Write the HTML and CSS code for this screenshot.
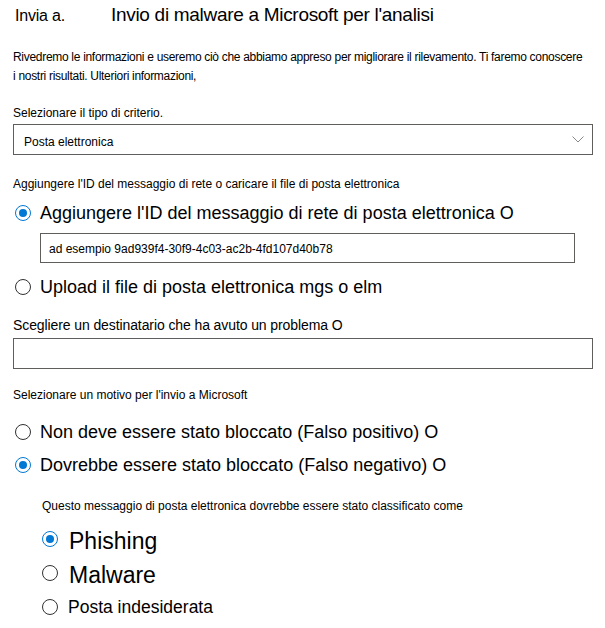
FILE: index.html
```html
<!DOCTYPE html>
<html lang="it">
<head>
<meta charset="utf-8">
<title>Invio di malware a Microsoft</title>
<link rel="stylesheet" href="styles.css">
</head>
<body>
<div class="page">
  <header class="head">
    <span class="crumb">Invia a.</span>
    <h1 class="title">Invio di malware a Microsoft per l'analisi</h1>
  </header>
  <p class="intro">Rivedremo le informazioni e useremo ciò che abbiamo appreso per migliorare il rilevamento. Ti faremo conoscere<br>i nostri risultati. Ulteriori informazioni,</p>

  <div class="label l1">Selezionare il tipo di criterio.</div>
  <div class="select">
    <span class="select-text">Posta elettronica</span>
    <svg class="chev" width="12" height="7" viewBox="0 0 12 7"><path d="M0.5 0.5 L6 6 L11.5 0.5" fill="none" stroke="#8a8886" stroke-width="1"/></svg>
  </div>

  <div class="label l2">Aggiungere l'ID del messaggio di rete o caricare il file di posta elettronica</div>
  <div class="radio big r1"><span class="dot on"></span><span>Aggiungere l'ID del messaggio di rete di posta elettronica O</span></div>
  <div class="field id-field"><span class="ph">ad esempio 9ad939f4-30f9-4c03-ac2b-4fd107d40b78</span></div>
  <div class="radio big r2"><span class="dot"></span><span>Upload il file di posta elettronica mgs o elm</span></div>

  <div class="label mid l3">Scegliere un destinatario che ha avuto un problema O</div>
  <div class="field wide"></div>

  <div class="label l4">Selezionare un motivo per l'invio a Microsoft</div>
  <div class="radio big r3"><span class="dot"></span><span>Non deve essere stato bloccato (Falso positivo) O</span></div>
  <div class="radio big r4"><span class="dot on"></span><span>Dovrebbe essere stato bloccato (Falso negativo) O</span></div>

  <div class="sub">
    <div class="label l5">Questo messaggio di posta elettronica dovrebbe essere stato classificato come</div>
    <div class="radio huge r5"><span class="dot on"></span><span>Phishing</span></div>
    <div class="radio huge r6"><span class="dot"></span><span>Malware</span></div>
    <div class="radio r7"><span class="dot"></span><span>Posta indesiderata</span></div>
  </div>
</div>
</body>
</html>
```

FILE: styles.css
```css
* { box-sizing: border-box; }
html, body { margin: 0; padding: 0; background: #fff; }
body { font-family: "Liberation Sans", Arial, sans-serif; color: #000; }
.page { padding: 0 12px 0 13px; display: flex; flex-direction: column; }

.head { display: flex; align-items: baseline; height: 48px; padding-top: 4px; }
.crumb { font-size: 16px; margin-left: 2px; width: 96px; letter-spacing: -0.2px; }
.title { font-size: 19px; font-weight: normal; margin: 0; letter-spacing: -0.3px; }

.intro { margin: 0; font-size: 12px; line-height: 19px; letter-spacing: -0.3px; }

.label { font-size: 12px; line-height: 16px; }
.label.mid { font-size: 14px; letter-spacing: -0.1px; }
.l1 { margin-top: 19px; }
.l2 { margin-top: 21px; }
.l3 { margin-top: 18px; }
.l4 { margin-top: 18px; }
.l5 { margin-top: 21px; }

.select { margin-top: 3px; height: 31px; border: 1px solid #605e5c; display: flex; align-items: center; justify-content: space-between; padding: 4px 8px 0 10px; }
.select-text { font-size: 12px; }
.chev { margin-top: -4px; }

.field { border: 1px solid #605e5c; display: flex; align-items: center; }
.id-field { margin: 8px 18px 0 27px; height: 30px; padding: 2px 0 0 8px; }
.ph { font-size: 12px; color: #000; }
.wide { margin-top: 5px; height: 31px; }

.radio { display: flex; align-items: center; gap: 9px; }
.radio.big { font-size: 18px; height: 24px; }
.radio.huge { font-size: 23px; height: 26px; gap: 11px; }
.radio.huge .dot { margin-top: -4px; }
.r1 { margin-top: 9px; margin-left: 2px; }
.r2 { margin-top: 12px; margin-left: 2px; }
.r3 { margin-top: 17px; margin-left: 2px; }
.r4 { margin-top: 9px; margin-left: 2px; }
.r5 { margin-top: 14px; }
.r6 { margin-top: 8px; }
.r7 { margin-top: 8px; height: 22px; font-size: 17.5px; gap: 10px; }

.sub { padding-left: 29px; display: flex; flex-direction: column; }

.dot { width: 16px; height: 16px; border: 1px solid #323130; border-radius: 50%; flex: none; position: relative; background: #fff; }
.dot.on { border-color: #0078d4; }
.dot.on::after { content: ""; position: absolute; left: 3px; top: 3px; width: 8px; height: 8px; border-radius: 50%; background: #0078d4; }
```
